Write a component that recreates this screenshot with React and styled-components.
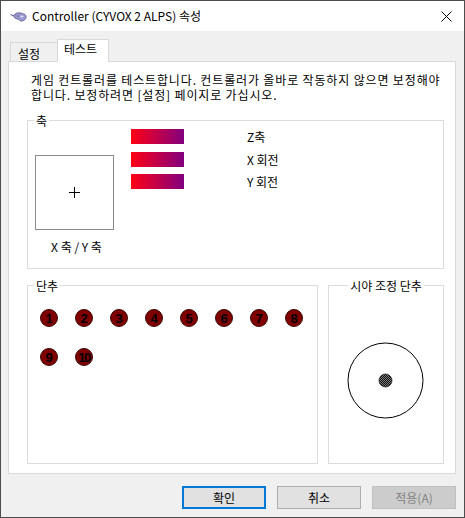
import React from "react";
import styled, { createGlobalStyle } from "styled-components";

const GlobalStyle = createGlobalStyle`
  html, body {
    margin: 0;
    padding: 0;
    background: #f0f0f0;
  }
  * {
    box-sizing: border-box;
  }
`;

const FONT = `"Noto Sans CJK KR", "Noto Sans", sans-serif`;

const Window = styled.div`
  width: 465px;
  height: 518px;
  border: 1px solid #4d4d4d;
  background: #f0f0f0;
  display: flex;
  flex-direction: column;
  font-family: ${FONT};
  font-size: 12px;
  color: #000;
`;

const TitleBar = styled.div`
  height: 30px;
  background: #fff;
  display: flex;
  align-items: center;
  padding: 0 12px 0 9px;
`;

const TitleText = styled.span`
  margin-left: 5px;
  font-size: 12px;
  line-height: 16px;
  flex: 1;
`;

const Body = styled.div`
  flex: 1;
  padding: 8px 7px 0 7px;
  display: flex;
  flex-direction: column;
`;

const TabStrip = styled.div`
  display: flex;
  align-items: flex-end;
  padding-left: 2px;
  height: 23px;
  margin-bottom: -1px;
  position: relative;
  z-index: 1;
`;

const Tab = styled.div`
  width: ${props => props.width}px;
  height: ${props => (props.active ? 23 : 20)}px;
  background: ${props => (props.active ? "#fff" : "#f0f0f0")};
  border: 1px solid #d9d9d9;
  border-bottom: ${props => (props.active ? "none" : "1px solid #d9d9d9")};
  margin-left: ${props => (props.active ? "-1px" : "0")};
  padding: ${props => (props.active ? "1px 0 0 6px" : "3px 0 0 7px")};
  line-height: 15px;
  white-space: nowrap;
`;

const Panel = styled.div`
  height: 413px;
  width: 448px;
  background: #fff;
  border: 1px solid #d9d9d9;
  padding: 10px 11px 0 18px;
  display: flex;
  flex-direction: column;
`;

const Intro = styled.p`
  margin: 0 0 18px 0;
  padding-left: 4px;
  line-height: 15px;
  white-space: nowrap;
  letter-spacing: 0.85px;
`;

const GroupBox = styled.div`
  position: relative;
  border: 1px solid #dcdcdc;
  height: ${props => props.height}px;
  width: ${props => (props.width ? `${props.width}px` : "auto")};
  flex: ${props => (props.grow ? "1" : "none")};
`;

const GroupCaption = styled.span`
  position: absolute;
  top: -8px;
  left: ${props => (props.centered ? "50%" : "6px")};
  transform: ${props => (props.centered ? "translateX(-50%)" : "none")};
  background: #fff;
  padding: 0 2px;
  line-height: 15px;
  white-space: nowrap;
`;

const AxisContent = styled.div`
  display: flex;
  padding: 8px 0 0 7px;
`;

const PadColumn = styled.div`
  display: flex;
  flex-direction: column;
  align-items: center;
  width: 79px;
  margin-top: 26px;
`;

const Pad = styled.div`
  width: 79px;
  height: 75px;
  border: 1px solid #8a8a8a;
  display: flex;
  align-items: center;
  justify-content: center;
`;

const PadCaption = styled.div`
  margin-top: 10px;
  line-height: 14px;
  white-space: nowrap;
  padding-left: 4px;
`;

const BarGrid = styled.div`
  display: grid;
  grid-template-columns: 53px auto;
  grid-auto-rows: 15px;
  row-gap: 7.5px;
  column-gap: 63px;
  margin-left: 17px;
  align-items: center;
`;

const Bar = styled.div`
  height: 15px;
  background: linear-gradient(to right, #ff0014, #820080);
`;

const BarLabel = styled.span`
  line-height: 15px;
  white-space: nowrap;
`;

const BottomRow = styled.div`
  display: flex;
  gap: 10px;
  margin-top: 16px;
`;

const ButtonGrid = styled.div`
  display: grid;
  grid-template-columns: repeat(8, 18px);
  grid-auto-rows: 18px;
  column-gap: 17px;
  row-gap: 21px;
  padding: 23px 0 0 12px;
`;

const JoyButton = styled.div`
  width: 18px;
  height: 18px;
  border-radius: 50%;
  background: #800000;
  border: 1px solid #3a0a0a;
  display: flex;
  align-items: center;
  justify-content: center;
  font-family: "Liberation Sans", Arial, sans-serif;
  font-weight: bold;
  font-size: 13px;
  letter-spacing: ${props => (props.wide ? "-1.5px" : "0")};
  color: #000;
  line-height: 1;
`;

const PovArea = styled.div`
  display: flex;
  justify-content: center;
  padding: 56px 2px 0 0;
`;

const ButtonBar = styled.div`
  display: flex;
  justify-content: flex-end;
  gap: 11px;
  margin-top: 12px;
  padding-right: 1px;
`;

const DialogButton = styled.button`
  width: 84px;
  height: 23px;
  font-family: ${FONT};
  font-size: 12px;
  line-height: 15px;
  padding: 0;
  background: ${props => (props.disabled ? "#cccccc" : "#e1e1e1")};
  color: ${props => (props.disabled ? "#838383" : "#000")};
  border: ${props =>
    props.primary ? "2px solid #0078d7" : props.disabled ? "1px solid #bfbfbf" : "1px solid #adadad"};
`;

function ControllerIcon() {
  return (
    <svg width="17" height="13" viewBox="0 0 17 13">
      <path d="M0.5 4.5 L4 6 L5 5" fill="none" stroke="#6f6fa8" strokeWidth="1.2" />
      <path
        d="M4 5.5 C5 3 8 2.5 11 3 L15 4.5 C16.5 5.5 16.5 8 15 9.5 L12.5 11 C11 11.5 9.5 10.5 8.5 9.5 L6 8.5 C4.5 8 3.5 7 4 5.5 Z"
        fill="#9a9ad0"
        stroke="#5a5a8e"
        strokeWidth="0.8"
      />
      <ellipse cx="12" cy="6.5" rx="1.6" ry="1" fill="#e0e0f4" />
      <circle cx="8" cy="6" r="0.8" fill="#5a5a8e" />
    </svg>
  );
}

function CloseIcon() {
  return (
    <svg width="11" height="11" viewBox="0 0 11 11">
      <path d="M0.5 0.5 L10.5 10.5 M10.5 0.5 L0.5 10.5" stroke="#000" strokeWidth="1" />
    </svg>
  );
}

function Crosshair() {
  return (
    <svg width="11" height="11" viewBox="0 0 11 11">
      <path d="M5.5 0 V11 M0 5.5 H11" stroke="#000" strokeWidth="1" />
    </svg>
  );
}

function PovDial() {
  return (
    <svg width="77" height="77" viewBox="0 0 77 77">
      <defs>
        <pattern id="dither" width="2" height="2" patternUnits="userSpaceOnUse">
          <rect width="2" height="2" fill="#7a7a7a" />
          <rect width="1" height="1" fill="#111" />
          <rect x="1" y="1" width="1" height="1" fill="#111" />
        </pattern>
      </defs>
      <circle cx="38.5" cy="38.5" r="37.5" fill="none" stroke="#000" strokeWidth="1" />
      <circle cx="38.5" cy="38.5" r="6.5" fill="url(#dither)" stroke="#222" strokeWidth="0.8" />
    </svg>
  );
}

const axes = ["Z축", "X 회전", "Y 회전"];
const buttons = [1, 2, 3, 4, 5, 6, 7, 8, 9, 10];

export default function App() {
  return (
    <>
      <GlobalStyle />
      <Window>
        <TitleBar>
          <ControllerIcon />
          <TitleText>Controller (CYVOX 2 ALPS) 속성</TitleText>
          <CloseIcon />
        </TitleBar>
        <Body>
          <TabStrip>
            <Tab width={48}>설정</Tab>
            <Tab width={52} active>
              테스트
            </Tab>
          </TabStrip>
          <Panel>
            <Intro>
              게임 컨트롤러를 테스트합니다. 컨트롤러가 올바로 작동하지 않으면 보정해야
              <br />
              합니다. 보정하려면 [설정] 페이지로 가십시오.
            </Intro>
            <GroupBox height={149}>
              <GroupCaption>축</GroupCaption>
              <AxisContent>
                <PadColumn>
                  <Pad>
                    <Crosshair />
                  </Pad>
                  <PadCaption>X 축 / Y 축</PadCaption>
                </PadColumn>
                <BarGrid>
                  {axes.map(label => (
                    <React.Fragment key={label}>
                      <Bar />
                      <BarLabel>{label}</BarLabel>
                    </React.Fragment>
                  ))}
                </BarGrid>
              </AxisContent>
            </GroupBox>
            <BottomRow>
              <GroupBox height={179} grow>
                <GroupCaption>단추</GroupCaption>
                <ButtonGrid>
                  {buttons.map(n => (
                    <JoyButton key={n} wide={n > 9}>
                      {n}
                    </JoyButton>
                  ))}
                </ButtonGrid>
              </GroupBox>
              <GroupBox height={179} width={116}>
                <GroupCaption centered>시야 조정 단추</GroupCaption>
                <PovArea>
                  <PovDial />
                </PovArea>
              </GroupBox>
            </BottomRow>
          </Panel>
          <ButtonBar>
            <DialogButton primary>확인</DialogButton>
            <DialogButton>취소</DialogButton>
            <DialogButton disabled>적용(A)</DialogButton>
          </ButtonBar>
        </Body>
      </Window>
    </>
  );
}
